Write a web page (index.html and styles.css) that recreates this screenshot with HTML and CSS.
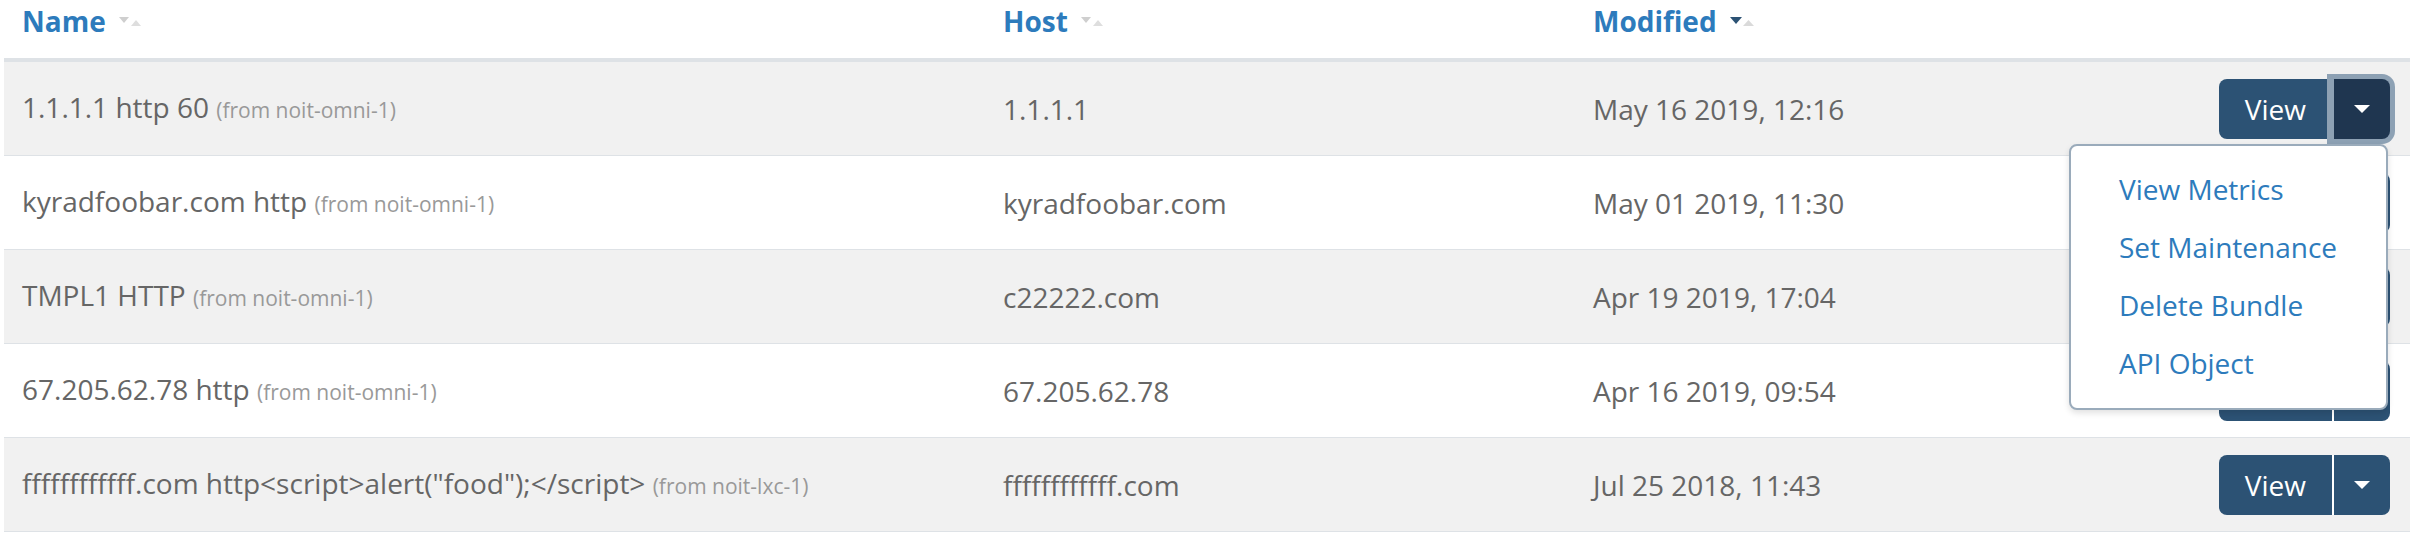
FILE: index.html
```html
<!DOCTYPE html>
<html>
<head>
<meta charset="utf-8">
<link rel="stylesheet" href="styles.css">
</head>
<body>
<div class="wrap">
<table class="checks">
  <colgroup>
    <col class="c-name"><col class="c-host"><col class="c-mod"><col class="c-act">
  </colgroup>
  <thead>
    <tr>
      <th>Name <span class="sort"><svg width="26" height="12" viewBox="0 0 26 12"><path d="M0 1h10l-5 6z" fill="#cfcfcf"/><path d="M12 10h10l-5-6z" fill="#dedede"/></svg></span></th>
      <th>Host <span class="sort"><svg width="26" height="12" viewBox="0 0 26 12"><path d="M0 1h10l-5 6z" fill="#cfcfcf"/><path d="M12 10h10l-5-6z" fill="#dedede"/></svg></span></th>
      <th>Modified <span class="sort"><svg width="26" height="12" viewBox="0 0 26 12"><path d="M0 1h12l-6 7z" fill="#2c5274"/><path d="M13 10h11l-5.5-6z" fill="#dadada"/></svg></span></th>
      <th></th>
    </tr>
  </thead>
  <tbody>
    <tr class="odd">
      <td>1.1.1.1 http 60 <small>(from noit-omni-1)</small></td>
      <td>1.1.1.1</td>
      <td>May 16 2019, 12:16</td>
      <td class="act">
        <div class="btn-group open">
          <button class="btn">View</button><button class="btn caret-btn active"><span class="caret"></span></button>
          <ul class="menu">
            <li>View Metrics</li>
            <li>Set Maintenance</li>
            <li>Delete Bundle</li>
            <li>API Object</li>
          </ul>
        </div>
      </td>
    </tr>
    <tr>
      <td>kyradfoobar.com http <small>(from noit-omni-1)</small></td>
      <td>kyradfoobar.com</td>
      <td>May 01 2019, 11:30</td>
      <td class="act"><div class="btn-group"><button class="btn">View</button><button class="btn caret-btn"><span class="caret"></span></button></div></td>
    </tr>
    <tr class="odd">
      <td>TMPL1 HTTP <small>(from noit-omni-1)</small></td>
      <td>c22222.com</td>
      <td>Apr 19 2019, 17:04</td>
      <td class="act"><div class="btn-group"><button class="btn">View</button><button class="btn caret-btn"><span class="caret"></span></button></div></td>
    </tr>
    <tr>
      <td>67.205.62.78 http <small>(from noit-omni-1)</small></td>
      <td>67.205.62.78</td>
      <td>Apr 16 2019, 09:54</td>
      <td class="act"><div class="btn-group"><button class="btn">View</button><button class="btn caret-btn"><span class="caret"></span></button></div></td>
    </tr>
    <tr class="odd">
      <td>ffffffffffff.com http&lt;script&gt;alert("food");&lt;/script&gt; <small>(from noit-lxc-1)</small></td>
      <td>ffffffffffff.com</td>
      <td>Jul 25 2018, 11:43</td>
      <td class="act"><div class="btn-group"><button class="btn">View</button><button class="btn caret-btn"><span class="caret"></span></button></div></td>
    </tr>
  </tbody>
</table>
</div>
</body>
</html>
```
FILE: styles.css
```css
html, body {
  margin: 0;
  padding: 0;
  background: #fff;
}
body {
  font-family: "Open Sans", "Noto Sans", sans-serif;
  color: #666;
  font-size: 28px;
}
.wrap {
  padding-left: 4px;
}
.checks {
  width: 2406px;
  border-collapse: separate;
  border-spacing: 0;
  table-layout: fixed;
}
.c-name { width: 981px; }
.c-host { width: 590px; }
.c-mod { width: 560px; }
.checks th {
  box-sizing: border-box;
  height: 62px;
  padding: 1px 18px 0;
  line-height: 40px;
  vertical-align: top;
  text-align: left;
  font-weight: 700;
  color: #2d7bbc;
  border-bottom: 4px solid #dee2e6;
  white-space: nowrap;
}
.sort {
  display: inline-block;
  margin-left: 6px;
  vertical-align: top;
  padding-top: 15px;
  line-height: 0;
}
.checks td {
  box-sizing: border-box;
  height: 94px;
  padding: 0 18px;
  vertical-align: middle;
  line-height: 40px;
  border-bottom: 1px solid #dee2e6;
  white-space: nowrap;
}
.checks tr.odd td {
  background: #f1f1f1;
}
small {
  font-size: 21px;
  color: #999;
}
.checks td.act {
  text-align: right;
  padding-right: 20px;
}
.btn-group {
  position: relative;
  display: inline-flex;
  vertical-align: middle;
}
.btn {
  font-family: "Open Sans", "Noto Sans", sans-serif;
  font-size: 28px;
  color: #fff;
  background: #2c5274;
  border: 0;
  height: 60px;
  padding: 0 26px;
  margin: 0;
  border-radius: 8px 0 0 8px;
  line-height: 60px;
}
.caret-btn {
  box-sizing: border-box;
  width: 58px;
  padding: 0;
  border-left: 2px solid #fff;
  border-radius: 0 8px 8px 0;
  display: flex;
  align-items: center;
  justify-content: center;
}
.caret-btn.active {
  background: #1f3650;
  box-shadow: 0 0 0 5px #8da1b4;
  border-left-color: #8da1b4;
  position: relative;
  z-index: 1;
}
.caret {
  width: 0;
  height: 0;
  border-left: 8px solid transparent;
  border-right: 8px solid transparent;
  border-top: 8px solid #fff;
}
.menu {
  position: absolute;
  top: calc(100% + 5px);
  right: 2px;
  width: 319px;
  box-sizing: border-box;
  margin: 0;
  padding: 14px 0 16px;
  list-style: none;
  background: #fff;
  border: 2px solid #9aabbb;
  border-radius: 8px;
  box-shadow: 0 3px 6px rgba(0, 0, 0, 0.12);
  text-align: left;
  z-index: 5;
}
.menu li {
  padding: 0 48px;
  line-height: 58px;
  color: #2d7bbc;
  white-space: nowrap;
}
```
